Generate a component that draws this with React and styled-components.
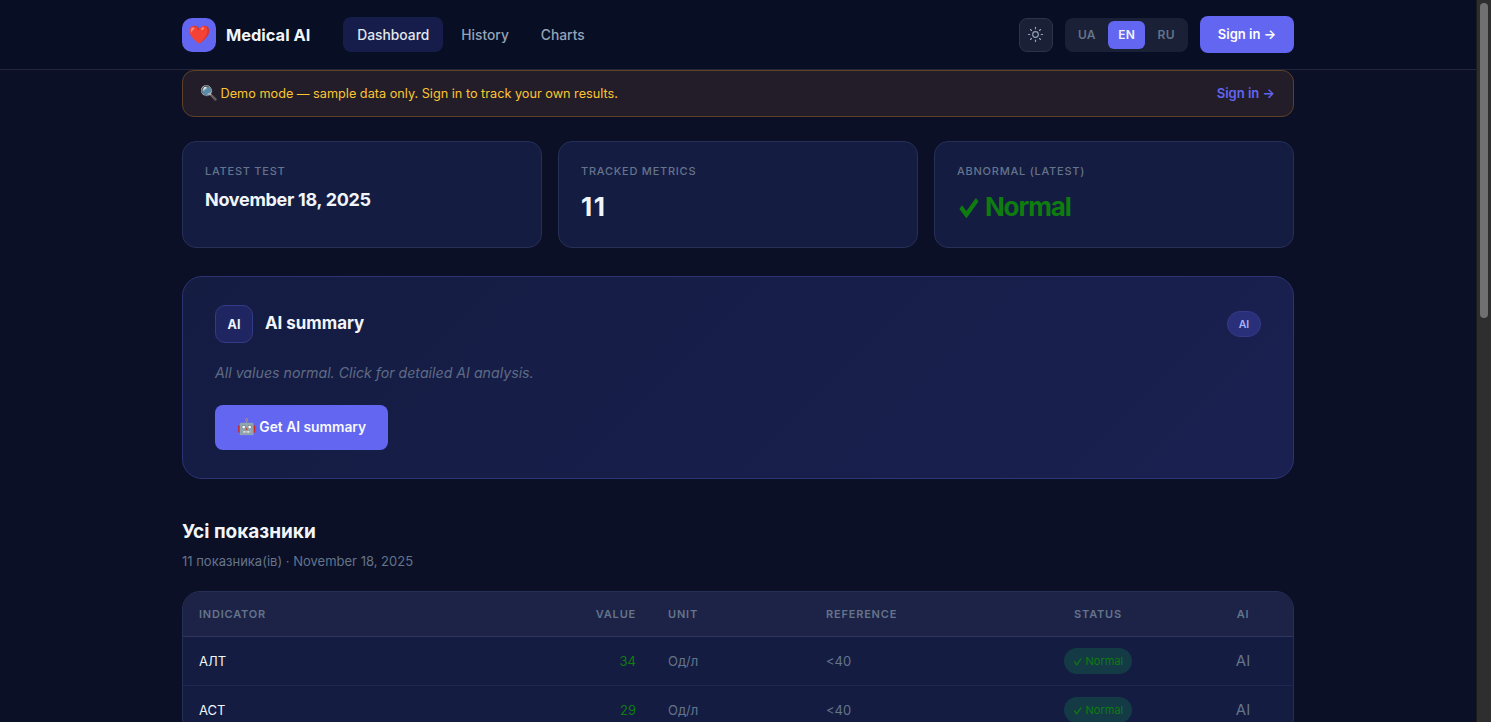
import React from "react";
import styled, { createGlobalStyle } from "styled-components";
import { Sun } from "lucide-react";

const rows = [
  { name: "АЛТ", value: "34", unit: "Од/л", reference: "<40" },
  { name: "АСТ", value: "29", unit: "Од/л", reference: "<40" },
];

const App = () => {
  return (
    <>
      <GlobalStyle />
      <Page>
        <Header>
          <HeaderInner>
            <Brand>
              <LogoBox>❤️</LogoBox>
              <BrandName>Medical AI</BrandName>
            </Brand>
            <Nav>
              <NavLink $active>Dashboard</NavLink>
              <NavLink>History</NavLink>
              <NavLink>Charts</NavLink>
            </Nav>
            <HeaderRight>
              <ThemeButton>
                <Sun size={17} strokeWidth={1.6} />
              </ThemeButton>
              <LangSwitch>
                <LangButton>UA</LangButton>
                <LangButton $active>EN</LangButton>
                <LangButton>RU</LangButton>
              </LangSwitch>
              <SignInButton>Sign in →</SignInButton>
            </HeaderRight>
          </HeaderInner>
        </Header>

        <Main>
          <DemoBanner>
            <DemoText>
              <DemoEmoji>🔍</DemoEmoji> Demo mode — sample data only. Sign in to track your own results.
            </DemoText>
            <DemoLink>Sign in →</DemoLink>
          </DemoBanner>

          <Stats>
            <StatCard>
              <StatLabel>Latest test</StatLabel>
              <StatDate>November 18, 2025</StatDate>
            </StatCard>
            <StatCard>
              <StatLabel>Tracked metrics</StatLabel>
              <StatValue>11</StatValue>
            </StatCard>
            <StatCard>
              <StatLabel>Abnormal (latest)</StatLabel>
              <StatValue $green>
                <BigCheck>✓</BigCheck> Normal
              </StatValue>
            </StatCard>
          </Stats>

          <SummaryCard>
            <SummaryHead>
              <SummaryTitleRow>
                <AiIcon>AI</AiIcon>
                <SummaryTitle>AI summary</SummaryTitle>
              </SummaryTitleRow>
              <AiPill>AI</AiPill>
            </SummaryHead>
            <SummaryText>All values normal. Click for detailed AI analysis.</SummaryText>
            <SummaryButton>
              <ButtonEmoji>🤖</ButtonEmoji> Get AI summary
            </SummaryButton>
          </SummaryCard>

          <SectionTitle>Усі показники</SectionTitle>
          <SectionSub>11 показника(ів) · November 18, 2025</SectionSub>

          <TableWrap>
            <Table>
              <colgroup>
                <col />
                <col width="100" />
                <col width="158" />
                <col width="193" />
                <col width="190" />
                <col width="100" />
              </colgroup>
              <thead>
                <tr>
                  <Th>Indicator</Th>
                  <Th $align="right">Value</Th>
                  <Th>Unit</Th>
                  <Th>Reference</Th>
                  <Th $align="center">Status</Th>
                  <Th $align="center">AI</Th>
                </tr>
              </thead>
              <tbody>
                {rows.map((r) => (
                  <tr key={r.name}>
                    <NameCell>{r.name}</NameCell>
                    <ValueCell>{r.value}</ValueCell>
                    <MutedCell>{r.unit}</MutedCell>
                    <MutedCell>{r.reference}</MutedCell>
                    <Td $align="center">
                      <StatusBadge>
                        <SmallCheck>✓</SmallCheck> Normal
                      </StatusBadge>
                    </Td>
                    <AiCell>AI</AiCell>
                  </tr>
                ))}
              </tbody>
            </Table>
          </TableWrap>
        </Main>
      </Page>
      <ScrollTrack>
        <ScrollThumb />
      </ScrollTrack>
    </>
  );
};

export default App;

const GlobalStyle = createGlobalStyle`
  html {
    background: #0b1026;
  }
  body {
    margin: 0;
    font-family: Inter, "Noto Sans", sans-serif;
    color: #f1f5f9;
  }
  * {
    box-sizing: border-box;
  }
`;

const Page = styled.div`
  margin-right: 15px;
  background: #0b1026;
`;

const ScrollTrack = styled.div`
  position: fixed;
  top: 0;
  right: 0;
  bottom: 0;
  width: 15px;
  padding: 3px 3px 2px;
  background: #2e2e2e;
  border-left: 1px solid #1c1c1c;
`;

const ScrollThumb = styled.div`
  height: 315px;
  border-radius: 4px;
  background: #707070;
`;

const Header = styled.header`
  height: 70px;
  border-bottom: 1px solid #25263a;
  background: #080e24;
`;

const HeaderInner = styled.div`
  width: 1112px;
  height: 69px;
  margin: 0 auto;
  display: flex;
  align-items: center;
`;

const Brand = styled.div`
  display: flex;
  align-items: center;
  gap: 10px;
  margin-right: 33px;
`;

const LogoBox = styled.div`
  width: 34px;
  height: 34px;
  border-radius: 10px;
  background: #6366f1;
  display: flex;
  align-items: center;
  justify-content: center;
  font-size: 18px;
`;

const BrandName = styled.span`
  font-size: 16.4px;
  font-weight: 700;
  color: #f1f5f9;
`;

const Nav = styled.nav`
  display: flex;
  gap: 4px;
`;

const NavLink = styled.a`
  height: 35px;
  padding: 0 14px;
  border-radius: 8px;
  display: flex;
  align-items: center;
  font-size: 13.8px;
  font-weight: 500;
  color: ${(p) => (p.$active ? "#e2e8f0" : "#94a3b8")};
  background: ${(p) => (p.$active ? "#161d4a" : "transparent")};
`;

const HeaderRight = styled.div`
  margin-left: auto;
  display: flex;
  align-items: center;
  gap: 12px;
`;

const ThemeButton = styled.button`
  width: 34px;
  height: 34px;
  border-radius: 8px;
  border: 1px solid #2d3348;
  background: #1a2035;
  color: #94a3b8;
  display: flex;
  align-items: center;
  justify-content: center;
  padding: 0;
`;

const LangSwitch = styled.div`
  height: 34px;
  padding: 3px;
  gap: 2px;
  border-radius: 8px;
  background: #1a2035;
  display: flex;
`;

const LangButton = styled.button`
  border: none;
  border-radius: 6px;
  padding: 0 10.2px;
  font-family: inherit;
  font-size: 12px;
  font-weight: 600;
  letter-spacing: 0.3px;
  color: ${(p) => (p.$active ? "#f1f5f9" : "#64748b")};
  background: ${(p) => (p.$active ? "#6366f1" : "transparent")};
`;

const SignInButton = styled.button`
  width: 94px;
  height: 37px;
  border: none;
  border-radius: 8px;
  padding: 0 0 1px;
  background: #6366f1;
  color: #fff;
  font-family: inherit;
  font-size: 13px;
  font-weight: 600;
`;

const Main = styled.main`
  width: 1112px;
  margin: 0 auto;
`;

const DemoBanner = styled.div`
  height: 47px;
  padding: 0 18px 2px 17px;
  border: 1px solid #5e4026;
  border-radius: 12px;
  background: #231d29;
  display: flex;
  align-items: center;
  justify-content: space-between;
  margin-bottom: 24px;
`;

const DemoText = styled.span`
  font-size: 12.7px;
  color: #fbc531;
`;

const DemoEmoji = styled.span`
  display: inline-block;
  width: 17px;
  font-size: 14.5px;
`;

const DemoLink = styled.a`
  font-size: 13px;
  font-weight: 600;
  color: #6366f1;
`;

const Stats = styled.div`
  display: grid;
  grid-template-columns: repeat(3, 1fr);
  gap: 16px;
  margin-bottom: 28px;
`;

const StatCard = styled.div`
  height: 107px;
  padding: 22px 22px 0;
  border: 1px solid #262f55;
  border-radius: 14px;
  background: #141c42;
`;

const StatLabel = styled.div`
  font-size: 11px;
  font-weight: 500;
  letter-spacing: 0.75px;
  line-height: 14px;
  text-transform: uppercase;
  color: #64748b;
  margin-bottom: 10px;
`;

const StatDate = styled.div`
  font-size: 18px;
  font-weight: 700;
  line-height: 24px;
  letter-spacing: -0.3px;
  color: #f1f5f9;
`;

const StatValue = styled.div`
  font-size: 26px;
  font-weight: 700;
  line-height: 38px;
  letter-spacing: ${(p) => (p.$green ? "-1.1px" : "1.5px")};
  color: ${(p) => (p.$green ? "#0f7c0f" : "#f1f5f9")};
`;

const BigCheck = styled.span`
  display: inline-block;
  margin-right: 1px;
  transform: scaleY(1.4);
`;

const SummaryCard = styled.section`
  height: 203px;
  padding: 28px 32px;
  border: 1px solid #2c3474;
  border-radius: 20px;
  background: linear-gradient(135deg, #141c42 0%, #1a2050 100%);
  margin-bottom: 40px;
`;

const SummaryHead = styled.div`
  display: flex;
  align-items: center;
  justify-content: space-between;
  margin-bottom: 19px;
`;

const SummaryTitleRow = styled.div`
  display: flex;
  align-items: center;
  gap: 12px;
`;

const AiIcon = styled.div`
  width: 38px;
  height: 38px;
  border: 1px solid #343b86;
  border-radius: 10px;
  background: #1f2560;
  display: flex;
  align-items: center;
  justify-content: center;
  font-size: 12.5px;
  font-weight: 700;
  color: #f1f5f9;
`;

const SummaryTitle = styled.h3`
  margin: 0 0 2px;
  font-size: 16.9px;
  font-weight: 700;
  color: #f1f5f9;
`;

const AiPill = styled.span`
  width: 34px;
  height: 26px;
  border: 1px solid #343b86;
  border-radius: 13px;
  background: #2a2f7a;
  display: flex;
  align-items: center;
  justify-content: center;
  font-size: 10.5px;
  font-weight: 600;
  color: #a5b4fc;
`;

const SummaryText = styled.p`
  margin: 0 0 21px;
  font-size: 14.2px;
  line-height: 22px;
  font-style: italic;
  color: #5f6b85;
`;

const SummaryButton = styled.button`
  width: 173px;
  height: 45px;
  border: none;
  border-radius: 8px;
  padding: 0 0 2px;
  background: #6366f1;
  color: #f8fafc;
  font-family: inherit;
  font-size: 13.8px;
  font-weight: 600;
`;

const ButtonEmoji = styled.span`
  font-size: 15.5px;
`;

const SectionTitle = styled.h2`
  margin: 0 0 6px;
  font-size: 19px;
  font-weight: 700;
  line-height: 26px;
  color: #f1f5f9;
`;

const SectionSub = styled.p`
  margin: 0 0 20px;
  font-size: 13px;
  line-height: 20px;
  color: #64748b;
`;

const TableWrap = styled.div`
  border: 1px solid #262f55;
  border-radius: 18px;
  overflow: hidden;
  background: #141c42;
`;

const Table = styled.table`
  width: 100%;
  border-collapse: collapse;
  table-layout: fixed;
`;

const Th = styled.th`
  height: 44px;
  padding: 0 16px;
  background: #1c2347;
  border-bottom: 1px solid #2d3560;
  font-size: 11px;
  font-weight: 600;
  letter-spacing: 0.8px;
  text-transform: uppercase;
  color: #64748b;
  text-align: ${(p) => p.$align || "left"};
`;

const Td = styled.td`
  height: 49px;
  padding: 0 16px;
  border-bottom: 1px solid #1f2750;
  font-size: 13px;
  text-align: ${(p) => p.$align || "left"};
`;

const NameCell = styled(Td)`
  font-weight: 400;
  color: #f1f5f9;
`;

const ValueCell = styled(Td)`
  text-align: right;
  font-weight: 400;
  color: #0f7c0f;
`;

const MutedCell = styled(Td)`
  color: #64748b;
`;

const AiCell = styled(Td)`
  text-align: center;
  font-size: 15px;
  color: #64748b;
`;

const StatusBadge = styled.span`
  display: inline-block;
  height: 26px;
  padding: 0 9px;
  border-radius: 13px;
  background: #143a46;
  color: #0f7c0f;
  font-size: 11px;
  font-weight: 400;
  line-height: 26px;
`;

const SmallCheck = styled.span`
  display: inline-block;
  transform: scaleY(1.4);
`;
